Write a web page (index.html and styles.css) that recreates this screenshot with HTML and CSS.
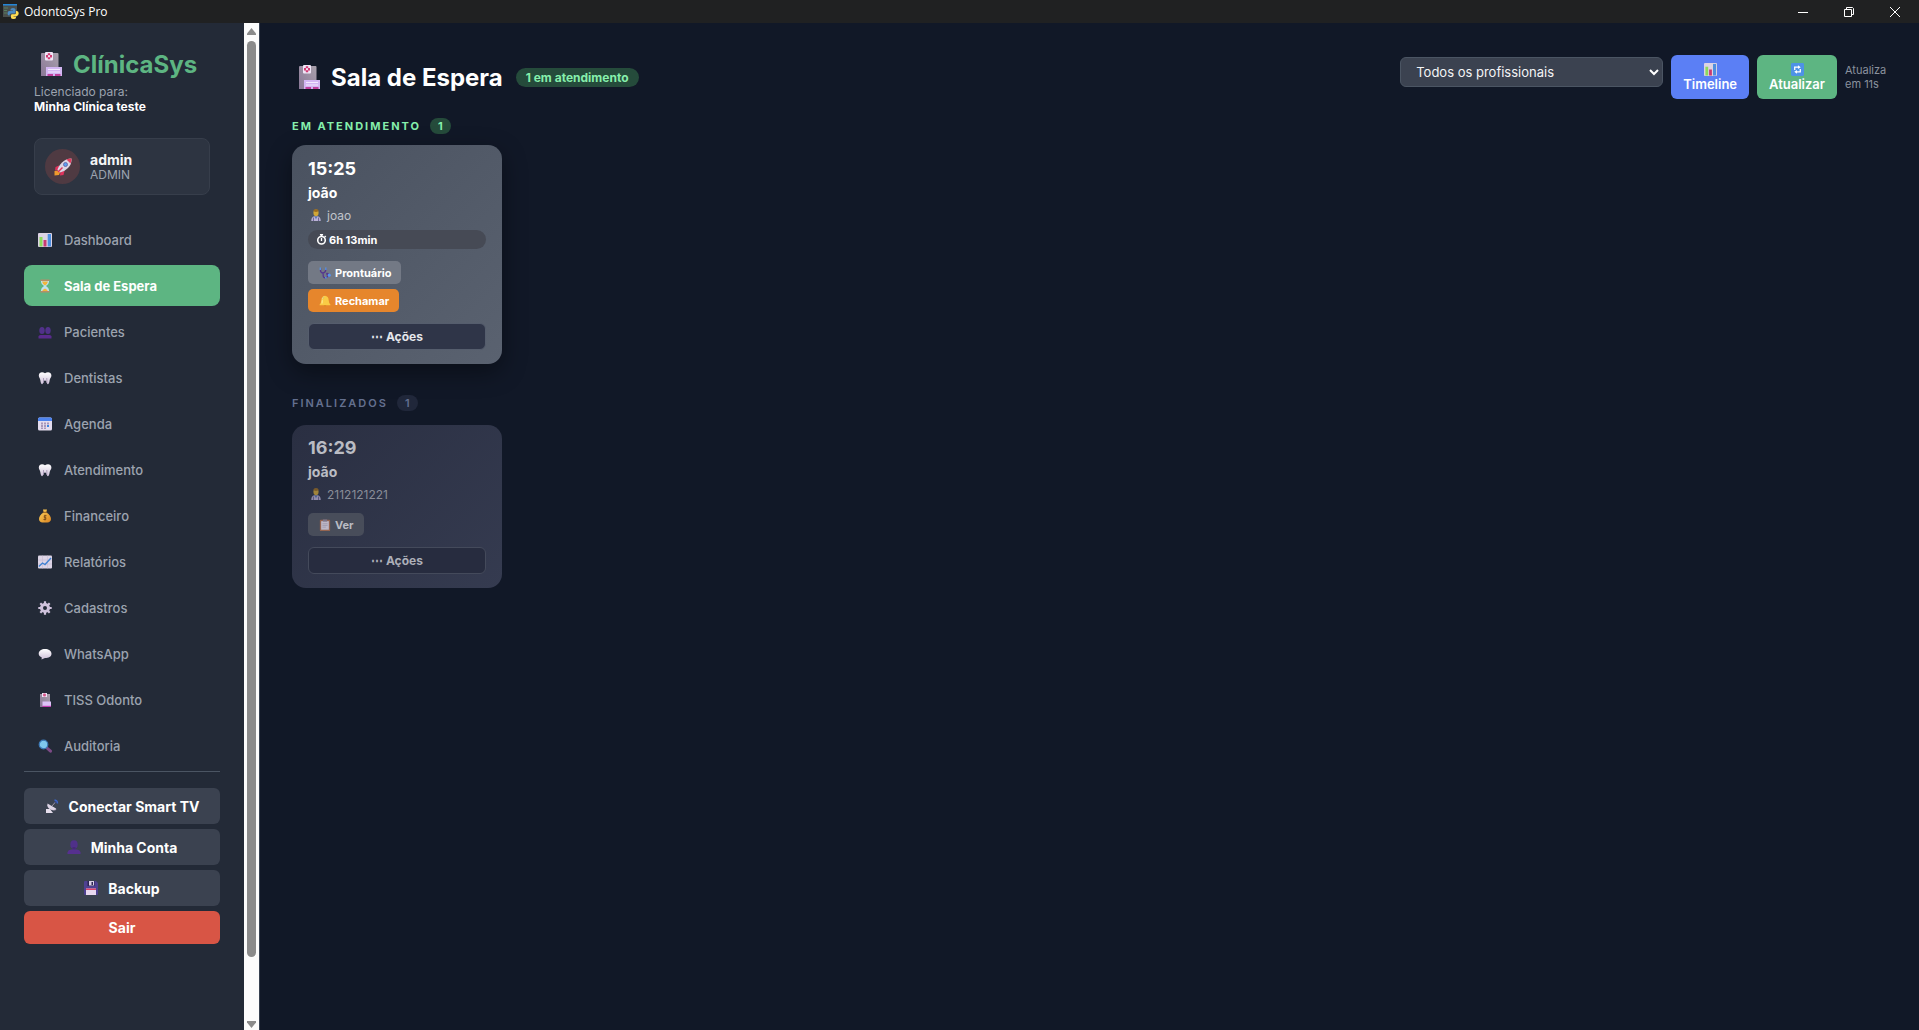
FILE: index.html
```html
<!DOCTYPE html>
<html lang="pt-BR">
<head>
  <meta charset="UTF-8">
  <meta name="viewport" content="width=device-width, initial-scale=1.0">
  <title>OdontoSys Pro</title>
  <link rel="stylesheet" href="styles.css">
</head>
<body>
  <!-- icon set -->
  <svg class="sprite" aria-hidden="true">
    <defs>
      <linearGradient id="gWall" x1="1" y1="0" x2="0" y2="1"><stop offset="0" stop-color="#a9a1ac"/><stop offset="1" stop-color="#8a7797"/></linearGradient>
      <linearGradient id="gTooth" x1="0" y1="0" x2="0" y2="1"><stop offset="0" stop-color="#fff"/><stop offset="1" stop-color="#cdbfd8"/></linearGradient>
      <linearGradient id="gGold" x1="0" y1="0" x2="1" y2="1"><stop offset="0" stop-color="#ffd35c"/><stop offset="1" stop-color="#d98320"/></linearGradient>
    </defs>
    <symbol id="i-hospital" viewBox="0 0 24 24">
      <path d="M2 2Q2 1 3 1H18.500Q19.500 1 19.500 2V24H2z" fill="url(#gWall)"/>
      <rect x="6" y="0" width="8" height="8.500" rx="1" fill="#efe6f7"/>
      <path d="M8.800 1.200h2.400v1.800H13v2.400h-1.800v1.800H8.800V5.400H7V3h1.800z" fill="#d23b74"/>
      <rect x="9" y="3.200" width="2" height="2" fill="#efe6f7"/>
      <path d="M7 15h16v9H7z" fill="#d3b6f3"/>
      <path d="M9 17.500h12M9 20h12" stroke="#f3e8ff" stroke-width="1"/>
      <path d="M8.500 22H14v2H8.500zM16 22h5.500v2H16z" fill="#bf3f9b"/>
    </symbol>
    <symbol id="i-hospital-sm" viewBox="0 0 14 14">
      <path d="M2 1h10v13H2z" fill="url(#gWall)"/>
      <path d="M4 0h5v4H4z" fill="#efe6f7"/><path d="M5.500.5h2v3h-2zM5 1.200h3v1.500H5z" fill="#d8568a"/>
      <path d="M4.500 8.500H13V13H4.500z" fill="#dcc3f7"/><path d="M4.500 12.800H13V14H4.500z" fill="#c03cb0"/>
    </symbol>
    <symbol id="i-chart" viewBox="0 0 14 14">
      <rect width="14" height="14" rx="1" y="0" fill="#dcd3e4"/>
      <path d="M1.500 4h3v9.500h-3z" fill="#8ddb5c"/><path d="M5.500 7h3v6.500h-3z" fill="#c93a71"/><path d="M9.700 1h3.300v12.500H9.700z" fill="#4e8fe0"/>
    </symbol>
    <symbol id="i-hourglass" viewBox="0 0 14 14">
      <path d="M3 1h8v2q0 2-3 4 3 2 3 4v2H3v-2q0-2 3-4-3-2-3-4z" fill="#bfe0ee"/>
      <path d="M4 2.500h6Q9.500 5 7 6.500 4.500 5 4 2.500zM4 12.500q.5-2 3-3 2.500 1 3 3z" fill="#f2b63a"/>
      <path d="M2.500.5h9v1.500h-9zM2.500 12h9v1.500h-9z" fill="#b38e68"/>
    </symbol>
    <symbol id="i-users" viewBox="0 0 14 14">
      <g fill="#51318a"><ellipse cx="4" cy="5.500" rx="2.700" ry="3.500"/><ellipse cx="10" cy="5.500" rx="2.700" ry="3.500"/><path d="M.5 13.500v-2q0-1.500 2-1.500h9q2 0 2 1.500v2z" fill="#5a2b8d"/></g>
    </symbol>
    <symbol id="i-user" viewBox="0 0 14 14">
      <ellipse cx="7" cy="4.500" rx="3.700" ry="4.300" fill="#4f3089"/><path d="M5.500 7h3v3h-3z" fill="#452878"/><path d="M.5 14v-1.500Q1 9.700 5 9.500h4q4 .2 4.500 3V14z" fill="#56308f"/>
    </symbol>
    <symbol id="i-tooth" viewBox="0 0 14 14">
      <path d="M7 2.200C4.500.5 1 1 .8 4.300.8 6.500 2 7 2.300 9c.3 2 .7 4 1.700 4.200C5.300 13.400 5 9.500 7 9.500s1.700 3.900 3 3.700c1-.2 1.400-2.200 1.700-4.200C12 7 13.500 6.500 13.400 4.300 13.200 1 9.500.5 7 2.200z" fill="url(#gTooth)"/>
      <path d="M5.500 7v5M8.800 7v5" stroke="#a08fae" stroke-width=".8"/>
    </symbol>
    <symbol id="i-calendar" viewBox="0 0 14 14">
      <rect width="14" height="13" y=".5" rx="1.500" fill="#e4dcee"/><path d="M0 4V2Q0 .5 1.500.5h11Q14 .5 14 2v2z" fill="#4d83ee"/>
      <g fill="#a796ba"><path d="M3 5.500h2v2H3zM6 5.500h2v2H6zM9 5.500h2v2H9zM3 8h2v2H3zM6 8h2v2H6zM3 10.500h2v1.500H3zM6 10.500h2v1.500H6z"/></g><path d="M9 8h2v2H9z" fill="#3d84e0"/>
    </symbol>
    <symbol id="i-money" viewBox="0 0 14 14">
      <path d="M5 .5h4l-.7 3c3 1.500 4.700 4 4.700 6.500 0 2.300-1.700 3.500-3.500 3.500h-5C2.500 13.500 1 12.300 1 10c0-2.500 1.700-5 4.700-6.500z" fill="url(#gGold)"/>
      <path d="M4.700 3.300h4.600" stroke="#8a5a20" stroke-width="1"/>
      <path d="M8.500 6.700H6.300v1.800h1.500v2H5.500M7 5.800v5.600" fill="none" stroke="#82501a" stroke-width="1"/>
    </symbol>
    <symbol id="i-trend" viewBox="0 0 14 14">
      <rect y=".5" width="14" height="13" rx="1" fill="#ddd5e6"/><path d="M0 5h14M0 9h14M4.500.5v13M9.500.5v13" stroke="#c2b7cf" stroke-width=".5"/>
      <path d="M.8 11.500 4.500 8l2.500 1.500L13 3" fill="none" stroke="#4283d2" stroke-width="1.400"/>
    </symbol>
    <symbol id="i-gear" viewBox="0 0 14 14">
      <circle cx="7" cy="7" r="3.500" fill="none" stroke="#cfc2dc" stroke-width="3"/>
      <path d="M7 .3v3M7 10.700v3M.3 7h3M10.700 7h3M2.300 2.300l2 2M9.700 9.700l2 2M2.300 11.700l2-2M9.700 4.300l2-2" stroke="#cfc2dc" stroke-width="2.200"/>
    </symbol>
    <symbol id="i-bubble" viewBox="0 0 14 14">
      <path d="M7 2c3.500 0 6.500 1.700 6.500 4.700S10.500 11 7 11L3.500 12.500 3.800 10.500C2 9.700.7 8.500.7 6.700.7 3.700 3.500 2 7 2z" fill="url(#gTooth)"/>
    </symbol>
    <symbol id="i-search" viewBox="0 0 14 14">
      <path d="M9 9l3.500 3.200" stroke="#7c4a86" stroke-width="3" stroke-linecap="round"/>
      <circle cx="5.500" cy="5.500" r="4.300" fill="#7fc8ee" stroke="#3d79b6" stroke-width="1.200"/>
    </symbol>
    <symbol id="i-dish" viewBox="0 0 14 14">
      <path d="M2 5.500q.5 5 6.500 6 2.500 0 3-1.500z" fill="#b8acc2"/><path d="M2.500 4.500 11 9.500q-1.500 2.300-5 1Q2 8.500 2.500 4.500z" fill="#ddd5e5"/>
      <path d="M1 10h4l3 4H1z" fill="#e6deec"/><path d="M7 7l3.500-4" stroke="#9d93a8" stroke-width="1"/>
      <path d="M9.500 1q3 .5 3 3.500" fill="none" stroke="#3c64c8" stroke-width="1.400"/><circle cx="10.500" cy="3" r="1" fill="#3a4a8c"/>
    </symbol>
    <symbol id="i-floppy" viewBox="0 0 14 14">
      <path d="M0 1Q0 0 1 0h11l2 2v11q0 1-1 1H1q-1 0-1-1z" fill="#4e4191"/><path d="M3.500 0h7v5h-7z" fill="#2c2552"/><path d="M5 0h5v4.500H5z" fill="#d9cfe6"/><path d="M7.500 1H9v3H7.500z" fill="#2c2552"/>
      <path d="M2 7.500h10V14H2z" fill="#e8d8ef"/><path d="M2 7.500h10V9H2z" fill="#d8446c"/>
    </symbol>
    <symbol id="i-rocket" viewBox="0 0 18 18">
      <path d="M.5 13 4 12.500l2 2-1 2.500-4.500.5z" fill="#f09a2c"/>
      <path d="M5 7.500 1.500 9 1 12.500 5 12zM10.500 13 9.500 17l-3.500.5.500-4z" fill="#e0335c"/>
      <path d="M17.500.5Q12 .5 8 4.500T3.500 12L6 14.500q4-.5 8-4.500T17.500.5z" fill="#ddd5e4"/>
      <path d="M17.500.5q-3 0-5 1l4 4q1-2 1-5z" fill="#e33b5d"/><circle cx="11.500" cy="6.500" r="2" fill="#5c9ef0" stroke="#635d9c" stroke-width=".8"/>
      <path d="M4 14l4.500-4.500" stroke="#e0335c" stroke-width="1.500"/>
    </symbol>
    <symbol id="i-doctor" viewBox="0 0 14 14">
      <path d="M1.500 14q0-5 3.500-5.500h4Q12.500 9 12.500 14z" fill="#b9b2d6"/><path d="M5 8.500h4L7 12z" fill="#5c73b5"/>
      <ellipse cx="7" cy="4.500" rx="3" ry="4" fill="#d0a637"/><ellipse cx="7" cy="1.800" rx="3" ry="1.600" fill="#9b6b1e"/><path d="M4 10v4M10 10v4" stroke="#5a5288" stroke-width="1"/>
    </symbol>
    <symbol id="i-watch" viewBox="0 0 14 14">
      <circle cx="7" cy="8" r="4.800" fill="none" stroke="currentColor" stroke-width="2"/><path d="M5 1h4M7 1v2M7 5v4M11 2.500l1.500 1.500" stroke="currentColor" stroke-width="1.700"/>
    </symbol>
    <symbol id="i-stetho" viewBox="0 0 14 14">
      <path d="M2 1.500Q1 7 4.500 7T8 1.500M5 7q-1 6 2.500 5.500T9.500 9t2.500 0" fill="none" stroke="#54358f" stroke-width="1.500"/>
      <path d="M1.500.5v3M8 .5v3" stroke="#5898e8" stroke-width="1.500"/><circle cx="12" cy="9.500" r="1.800" fill="#5692ed"/><circle cx="8" cy="12.500" r="1" fill="#5692ed"/>
    </symbol>
    <symbol id="i-bell" viewBox="0 0 14 14">
      <path d="M7 1q4 .5 4.300 5 .2 3.500 2 5v1H.7v-1q1.800-1.500 2-5Q3 1.500 7 1z" fill="#f9cb45"/><path d="M4 5q.3-2.500 2-3M3.500 10l.4-4" stroke="#fff0a8" stroke-width="1"/><path d="M5.500 12h3q-.2 1.500-1.500 1.500T5.500 12z" fill="#d88b22"/>
    </symbol>
    <symbol id="i-clip" viewBox="0 0 14 14">
      <rect x="1" y="1" width="12" height="13" rx="1" fill="#b56f4c"/><path d="M2.500 2.500h9V12.500h-9z" fill="#efe6f6"/><path d="M4.500.5h5V3h-5z" fill="#93869c"/><path d="M4 5.500h6M4 7.500h6M4 9.500h4" stroke="#b9adc4" stroke-width=".8"/>
    </symbol>
    <symbol id="i-refresh" viewBox="0 0 14 14">
      <rect width="14" height="14" rx="1.500" fill="#4e92e6"/><path d="M4 7.500V4.500h4M10 6.500v3H6" fill="none" stroke="#fff" stroke-width="1.400"/><path d="M7.500 2.500v4l3-2zM6.500 7.500v4l-3-2z" fill="#fff"/>
    </symbol>
  </svg>

  <header class="titlebar">
    <svg class="app-icon" viewBox="0 0 16 16" aria-hidden="true">
      <path d="M0 0h14v13H0z" fill="#4a4f4c"/><path d="M0 0h14v1.500H0z" fill="#2386d8"/><path d="M1 4h4M1 6.500h3M1 9h3" stroke="#5c8a66" stroke-width=".8"/>
      <path d="M7.500 5.500q0-1.500 2.500-1.500t2.500 1.500V8.500q0 1-1 1H8q-1.500 0-1.500 2H5.800Q4.500 11 4.500 9.200T6 7h4v-.5H7.500z" fill="#4b8bc4"/>
      <path d="M13 7h1q1.700.3 1.700 2.300T14 12h-3.500v.5H13v1q0 1.500-2.500 1.500T8 13.500V11.500q0-1.300 1.300-1.300H12Q13 10 13 8.700z" fill="#ffdc52"/>
    </svg>
    <span class="app-name">OdontoSys Pro</span>
    <div class="window-buttons">
      <button type="button" aria-label="Minimizar"><svg viewBox="0 0 10 10"><path d="M0 5.500h10"/></svg></button>
      <button type="button" aria-label="Restaurar"><svg viewBox="0 0 10 10"><path d="M.5 2.500h7v7h-7zM2.500 2.500V.5h6l1 1v6h-2"/></svg></button>
      <button type="button" aria-label="Fechar"><svg viewBox="0 0 10 10"><path d="M0 0l10 10M10 0 0 10"/></svg></button>
    </div>
  </header>

  <div class="app">
    <aside class="sidebar">
      <div class="sidebar-content">
        <div class="brand">
          <div class="brand-name"><svg class="icon-lg"><use href="#i-hospital"/></svg>ClínicaSys</div>
          <p class="license">Licenciado para:<br><strong>Minha Clínica teste</strong></p>
        </div>

        <div class="user-card">
          <div class="avatar"><svg><use href="#i-rocket"/></svg></div>
          <div>
            <div class="user-name">admin</div>
            <div class="user-role">ADMIN</div>
          </div>
        </div>

        <nav class="menu">
          <a href="#"><svg><use href="#i-chart"/></svg>Dashboard</a>
          <a href="#" class="active"><svg><use href="#i-hourglass"/></svg>Sala de Espera</a>
          <a href="#"><svg><use href="#i-users"/></svg>Pacientes</a>
          <a href="#"><svg><use href="#i-tooth"/></svg>Dentistas</a>
          <a href="#"><svg><use href="#i-calendar"/></svg>Agenda</a>
          <a href="#"><svg><use href="#i-tooth"/></svg>Atendimento</a>
          <a href="#"><svg><use href="#i-money"/></svg>Financeiro</a>
          <a href="#"><svg><use href="#i-trend"/></svg>Relatórios</a>
          <a href="#"><svg><use href="#i-gear"/></svg>Cadastros</a>
          <a href="#"><svg><use href="#i-bubble"/></svg>WhatsApp</a>
          <a href="#"><svg><use href="#i-hospital-sm"/></svg>TISS Odonto</a>
          <a href="#"><svg><use href="#i-search"/></svg>Auditoria</a>
        </nav>

        <div class="sidebar-footer">
          <button type="button"><svg><use href="#i-dish"/></svg>Conectar Smart TV</button>
          <button type="button"><svg><use href="#i-user"/></svg>Minha Conta</button>
          <button type="button"><svg><use href="#i-floppy"/></svg>Backup</button>
          <button type="button" class="logout">Sair</button>
        </div>
      </div>
      <div class="scrollbar" aria-hidden="true">
        <svg viewBox="0 0 9 7"><path d="M4.500 0 9 5.500V7H0V5.500z"/></svg>
        <div class="track"><div class="thumb"></div></div>
        <svg viewBox="0 0 9 7"><path d="M0 0h9v1.500L4.500 7 0 1.500z"/></svg>
      </div>
    </aside>

    <main class="content">
      <div class="page-header">
        <h1><svg class="icon-lg"><use href="#i-hospital"/></svg>Sala de Espera</h1>
        <span class="status-pill">1 em atendimento</span>
        <div class="toolbar">
          <div class="select-wrap">
            <select aria-label="Profissional">
              <option>Todos os profissionais</option>
            </select>
            <svg class="chevron" viewBox="0 0 10 7"><path d="M1 1l4 4 4-4"/></svg>
          </div>
          <button type="button" class="btn-timeline"><svg><use href="#i-chart"/></svg>Timeline</button>
          <button type="button" class="btn-refresh"><svg><use href="#i-refresh"/></svg>Atualizar</button>
          <span class="countdown">Atualiza em 11s</span>
        </div>
      </div>

      <section class="group">
        <h2>EM ATENDIMENTO <span class="count">1</span></h2>
        <div class="cards">
          <article class="card">
            <div class="time">15:25</div>
            <div class="patient">joão</div>
            <div class="doctor"><svg><use href="#i-doctor"/></svg>joao</div>
            <div class="timer"><svg><use href="#i-watch"/></svg>6h 13min</div>
            <div class="card-buttons">
              <button type="button"><svg><use href="#i-stetho"/></svg>Prontuário</button>
              <button type="button" class="recall"><svg><use href="#i-bell"/></svg>Rechamar</button>
            </div>
            <button type="button" class="actions">⋯ Ações</button>
          </article>
        </div>
      </section>

      <section class="group finished">
        <h2>FINALIZADOS <span class="count">1</span></h2>
        <div class="cards">
          <article class="card">
            <div class="time">16:29</div>
            <div class="patient">joão</div>
            <div class="doctor"><svg><use href="#i-doctor"/></svg>2112121221</div>
            <div class="card-buttons">
              <button type="button"><svg><use href="#i-clip"/></svg>Ver</button>
            </div>
            <button type="button" class="actions">⋯ Ações</button>
          </article>
        </div>
      </section>
    </main>
  </div>
</body>
</html>
```
FILE: styles.css
```css
* {
  box-sizing: border-box;
  margin: 0;
  padding: 0;
}

body {
  display: flex;
  flex-direction: column;
  min-height: 100vh;
  background: #111827;
  color: #f3f4f6;
  font-family: Inter, "Liberation Sans", sans-serif;
  font-size: 14px;
}

button,
select {
  font-family: inherit;
  border: none;
  cursor: pointer;
}

svg {
  flex: none;
}

.sprite {
  position: absolute;
  width: 0;
  height: 0;
}

.icon-lg {
  width: 24px;
  height: 24px;
}

/* window title bar */
.titlebar {
  display: flex;
  align-items: center;
  height: 23px;
  padding: 0 1px 0 3px;
  background: #202122;
}

.app-icon {
  width: 16px;
  height: 16px;
}

.app-name {
  margin-left: 5px;
  color: #fff;
  font: 12px "Open Sans", "Noto Sans", sans-serif;
}

.window-buttons {
  display: flex;
  margin-left: auto;
}

.window-buttons button {
  display: flex;
  align-items: center;
  justify-content: center;
  width: 46px;
  height: 23px;
  background: none;
}

.window-buttons svg {
  width: 10px;
  height: 10px;
  fill: none;
  stroke: #fff;
  overflow: visible;
}

.app {
  display: flex;
  flex: 1;
}

/* sidebar */
.sidebar {
  display: flex;
  width: 260px;
  background: #232a37;
  border-right: 1px solid #374151;
}

.sidebar-content {
  flex: 1;
  padding: 24px;
}

.brand {
  padding: 0 10px;
}

.brand-name {
  display: flex;
  align-items: center;
  gap: 10px;
  height: 34px;
  padding-left: 5px;
  color: #5db582;
  font-size: 24px;
  font-weight: 700;
}

.license {
  margin-top: 3px;
  color: #9ca3af;
  font-size: 12px;
  line-height: 15px;
}

.license strong {
  color: #fff;
}

.user-card {
  display: flex;
  align-items: center;
  gap: 10px;
  height: 57px;
  margin: 24px 10px;
  padding: 0 10px;
  background: #2d3441;
  border: 1px solid #373e4b;
  border-radius: 8px;
}

.avatar {
  display: flex;
  align-items: center;
  justify-content: center;
  width: 35px;
  height: 35px;
  background: #4f3a42;
  border-radius: 50%;
}

.avatar svg {
  width: 18px;
  height: 18px;
}

.user-name {
  color: #f3f4f6;
  font-size: 14px;
  font-weight: 700;
  line-height: 16px;
}

.user-role {
  color: #9ca3af;
  font-size: 12px;
  line-height: 14px;
}

.menu {
  display: flex;
  flex-direction: column;
  gap: 5px;
}

.menu a {
  display: flex;
  align-items: center;
  gap: 12px;
  height: 41px;
  padding-left: 14px;
  border-radius: 8px;
  color: #9ca3af;
  font-size: 13px;
  font-weight: 500;
  text-decoration: none;
}

.menu svg {
  width: 14px;
  height: 14px;
}

.menu .active {
  background: #5db582;
  color: #fff;
  font-weight: 700;
}

.sidebar-footer {
  display: flex;
  flex-direction: column;
  gap: 5px;
  margin-top: 5px;
  padding-top: 16px;
  border-top: 1px solid #4b5563;
}

.sidebar-footer button {
  display: flex;
  align-items: center;
  justify-content: center;
  gap: 10px;
  height: 36px;
  background: #3b4250;
  border-radius: 6px;
  color: #fff;
  font-size: 14px;
  font-weight: 700;
}

.sidebar-footer svg {
  width: 14px;
  height: 14px;
}

.sidebar-footer .logout {
  height: 33px;
  background: #d85545;
}

.scrollbar {
  display: flex;
  flex-direction: column;
  align-items: center;
  gap: 6px;
  width: 15px;
  padding: 5px 0 2px;
  background: #fcfcfc;
}

.scrollbar svg {
  width: 9px;
  height: 7px;
  fill: #8b8b8b;
}

.track {
  flex: 1;
  width: 9px;
}

.thumb {
  height: 94%;
  background: #8b8b8b;
  border-radius: 5px;
}

/* main area */
.content {
  flex: 1;
  padding: 32px;
}

.page-header {
  display: flex;
  align-items: center;
  height: 44px;
}

h1 {
  display: flex;
  align-items: center;
  gap: 10px;
  padding-left: 5px;
  color: #fff;
  font-size: 24px;
  font-weight: 700;
}

.status-pill {
  margin-left: 13px;
  padding: 0 10px;
  background: #254b3b;
  border-radius: 10px;
  color: #86efac;
  font-size: 12px;
  font-weight: 700;
  line-height: 19px;
}

.toolbar {
  display: flex;
  align-items: center;
  gap: 8px;
  margin-left: auto;
}

.select-wrap {
  position: relative;
  align-self: flex-start;
  padding-top: 2px;
}

.select-wrap select {
  width: 263px;
  height: 30px;
  padding: 0 15px;
  appearance: none;
  background: #3b4250;
  border: 1px solid #4b5563;
  border-radius: 6px;
  color: #f3f4f6;
  font-size: 13px;
}

.chevron {
  position: absolute;
  top: 14px;
  right: 4px;
  width: 10px;
  height: 7px;
  fill: none;
  stroke: #fff;
  stroke-width: 2;
  pointer-events: none;
}

.toolbar button {
  display: flex;
  flex-direction: column;
  align-items: center;
  justify-content: center;
  height: 44px;
  padding: 0 12px;
  border-radius: 6px;
  color: #fff;
  font-size: 13px;
  font-weight: 600;
  line-height: 16px;
}

.toolbar button svg {
  width: 13px;
  height: 13px;
}

.btn-timeline {
  background: #5b7ff5;
}

.btn-refresh {
  background: #5db582;
}

.countdown {
  width: 42px;
  color: #8b929e;
  font-size: 11px;
  line-height: 14px;
}

.group {
  margin-top: 19px;
}

h2 {
  display: flex;
  align-items: center;
  gap: 9px;
  height: 16px;
  color: #86efac;
  font-size: 11px;
  font-weight: 700;
  letter-spacing: 2px;
}

.count {
  padding: 0 8px;
  background: #254b3b;
  border-radius: 10px;
  font-size: 11px;
  letter-spacing: 0;
  line-height: 16px;
}

.cards {
  display: grid;
  grid-template-columns: repeat(auto-fill, 210px);
  gap: 14px;
  margin-top: 11px;
}

.card {
  padding: 12px 16px 14px;
  background: linear-gradient(135deg, #4a5260, #5a6270);
  border-radius: 14px;
  box-shadow: 0 8px 24px rgba(0, 0, 0, 0.4);
  color: #fff;
}

.time {
  font-size: 18px;
  font-weight: 700;
  line-height: 24px;
}

.patient {
  font-weight: 700;
  line-height: 24px;
}

.doctor {
  display: flex;
  align-items: center;
  gap: 5px;
  height: 20px;
  padding-left: 2px;
  color: #c0c4cb;
  font-size: 12px;
}

.doctor svg,
.card-buttons svg {
  width: 12px;
  height: 12px;
}

.timer {
  display: flex;
  align-items: center;
  gap: 2px;
  height: 19px;
  margin-top: 5px;
  padding: 0 8px;
  background: #464a55;
  border-radius: 10px;
  font-size: 11px;
  font-weight: 700;
}

.timer svg {
  width: 11px;
  height: 11px;
}

.card-buttons {
  display: flex;
  flex-wrap: wrap;
  gap: 5px;
  margin: 12px 0 11px;
}

.card-buttons button {
  display: flex;
  align-items: center;
  gap: 4px;
  height: 23px;
  padding: 0 10px 0 11px;
  background: #737985;
  border-radius: 5px;
  color: #fff;
  font-size: 11px;
  font-weight: 700;
}

.card-buttons .recall {
  background: #e6862c;
}

.actions {
  display: block;
  width: 100%;
  height: 27px;
  background: #2f3548;
  border: 1px solid #555d6d;
  border-radius: 6px;
  color: #e5e7eb;
  font-size: 12px;
  font-weight: 700;
}

.finished {
  margin-top: 31px;
}

.finished h2 {
  color: #64708f;
  font-weight: 600;
}

.finished .count {
  background: #20273a;
}

.finished .cards {
  margin-top: 14px;
}

.finished .card {
  padding-top: 11px;
  background: linear-gradient(135deg, #2a2f42, #353b50);
  box-shadow: none;
  color: #babcc3;
}

.finished .doctor {
  color: #898d98;
}

.finished .doctor svg,
.finished .card-buttons svg {
  opacity: 0.7;
}

.finished .card-buttons {
  margin-top: 9px;
}

.finished .card-buttons button {
  background: #484d5a;
  color: #babcc3;
}

.finished .actions {
  background: #272c3f;
  border-color: #444a5b;
  color: #acafb8;
}
```
